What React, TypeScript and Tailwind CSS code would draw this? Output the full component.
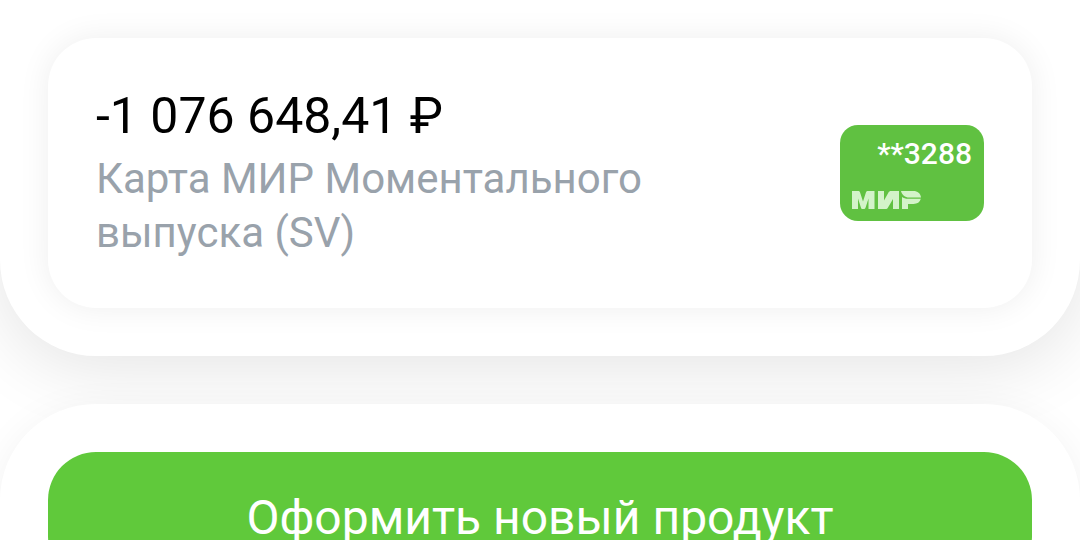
const cards = [
  {
    id: "3288",
    balance: "-1 076 648,41 ₽",
    title: "Карта МИР Моментального выпуска (SV)",
    mask: "**3288",
  },
]

function MirLogo() {
  return (
    <svg viewBox="0 0 69 18" className="h-[18px] w-[69px] self-start fill-[#d3f3c9]" role="img" aria-label="МИР">
      <path d="M0 18V0h6c1 0 1.700.4 2 1.300L11 10.500 14 1.300C14.300.4 15 0 16 0h6.500v18h-6V7.500l-2.900 9c-.4 1-1 1.500-2 1.500H10.500c-.7 0-1.300-.5-1.600-1.500L6 7.500V18z" />
      <path d="M26 0h6v9.500L36.500 1.500C37 .5 37.800 0 39 0h8v18h-6V8L36 16.500C35.500 17.500 34.700 18 33.500 18H26z" />
      <path d="M49 0h12.500C65.500 0 68.500 2.200 69 6.500H57c-4 0-7-2.500-8-6.500z" />
      <path d="M50 6C51.500 7.200 53.500 7.800 56 7.800h12.800c-.8 3.400-3.600 5.200-7.300 5.200H56v5h-6z" />
    </svg>
  )
}

export default function App() {
  return (
    <div className="h-screen overflow-hidden bg-white font-[Roboto,sans-serif]">
      <main className="flex flex-col gap-12">
        <section className="rounded-b-[96px] bg-white px-12 pt-[38px] pb-12 shadow-[0_12px_72px_rgba(0,0,0,0.11)]">
          <ul>
            {cards.map((card) => (
              <li
                key={card.id}
                className="flex items-center justify-between gap-12 rounded-[48px] bg-white p-12 shadow-[0_0_32px_rgba(0,0,0,0.07)]"
              >
                <div className="flex max-w-[600px] flex-col gap-1.5">
                  <p className="text-[50px] leading-[60px] text-black">{card.balance}</p>
                  <p className="text-[42px] leading-[54px] text-[#99a2ab]">{card.title}</p>
                </div>
                <div className="flex h-24 w-36 shrink-0 flex-col justify-between rounded-[18px] bg-[#60c141] p-3">
                  <span className="text-right text-[30px] leading-[34px] font-medium text-white">{card.mask}</span>
                  <MirLogo />
                </div>
              </li>
            ))}
          </ul>
        </section>

        <section className="rounded-[96px] bg-white p-12 shadow-[0_8px_40px_rgba(0,0,0,0.06)]">
          <button
            type="button"
            className="w-full rounded-[48px] bg-[#60c93b] py-9 text-[48px] leading-[60px] text-white"
          >
            Оформить новый продукт
          </button>
        </section>
      </main>
    </div>
  )
}
